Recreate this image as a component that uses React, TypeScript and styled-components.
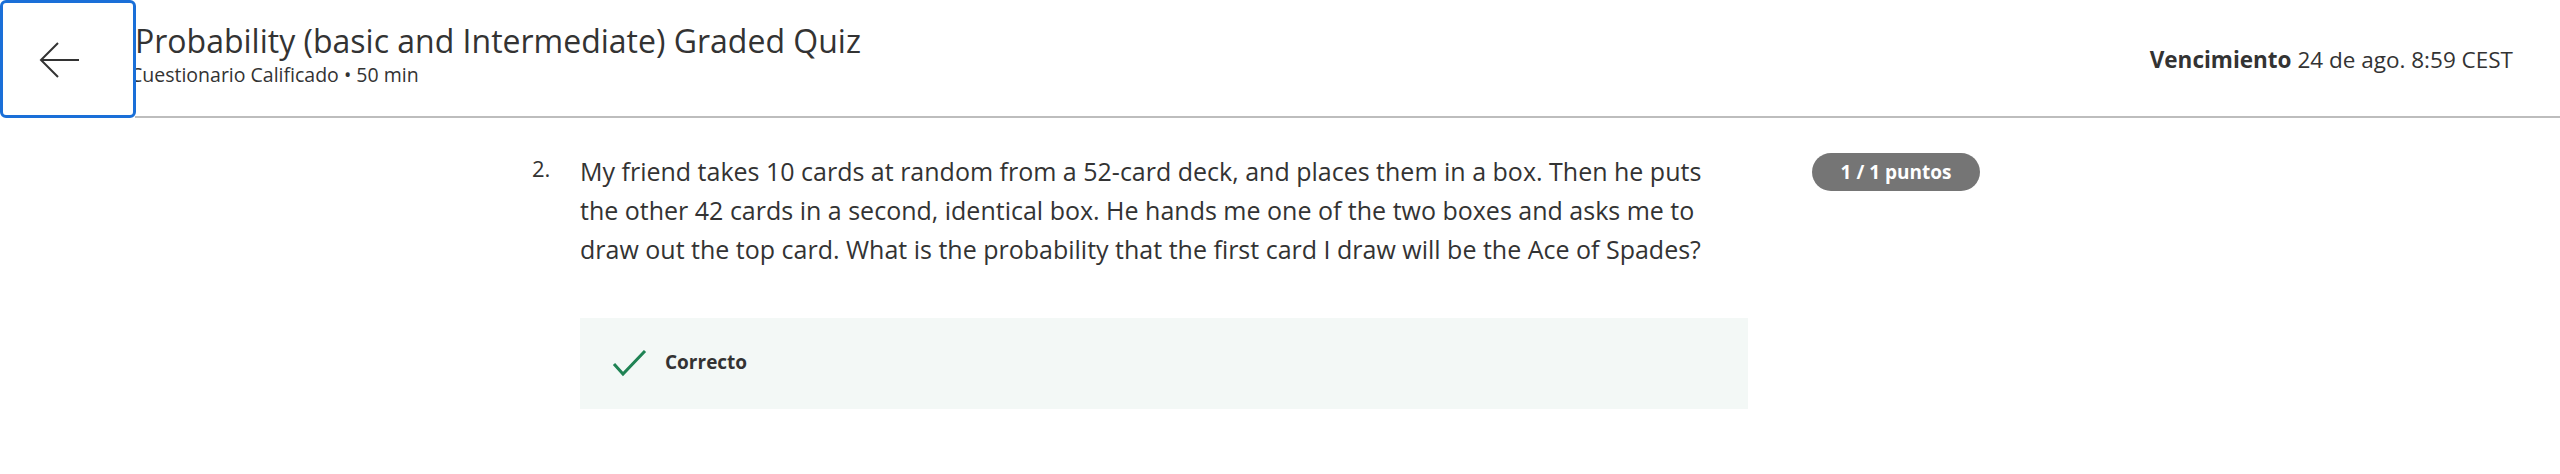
import React from 'react';
import styled, { createGlobalStyle } from 'styled-components';

const GlobalStyle = createGlobalStyle`
  html, body {
    margin: 0;
    padding: 0;
    background: #fff;
    font-family: 'Open Sans', 'Liberation Sans', sans-serif;
    color: #333;
  }
`;

const Page = styled.div`
  width: 2560px;
  height: 474px;
  background: #fff;
`;

const Header = styled.header`
  display: flex;
  align-items: stretch;
  height: 118px;
`;

const BackButton = styled.button`
  flex: 0 0 136px;
  height: 118px;
  box-sizing: border-box;
  display: flex;
  align-items: center;
  justify-content: center;
  background: #fff;
  border: solid 3px #1a6fd8;
  border-radius: 6px;
  padding: 2px 16px 0 0;
  margin: 0;
  cursor: pointer;
  position: relative;
  z-index: 1;
`;

const HeaderBar = styled.div`
  flex: 1;
  display: flex;
  align-items: center;
  justify-content: space-between;
  border-bottom: solid 2px #bdbdbd;
  margin-left: -1px;
  padding-right: 47px;
`;

const TitleBlock = styled.div`
  display: flex;
  flex-direction: column;
  margin-top: -8px;
`;

const Title = styled.h1`
  margin: 0;
  font-size: 32px;
  line-height: 42px;
  font-weight: 400;
  color: #333;
`;

const Subtitle = styled.div`
  font-size: 19.5px;
  line-height: 26px;
  color: #333;
  margin-left: -5px;
`;

const DueDate = styled.div`
  font-size: 22.5px;
  color: #333;
  margin-top: 2px;

  strong {
    font-weight: 700;
  }
`;

const Body = styled.main`
  display: flex;
  align-items: flex-start;
  padding-top: 150px;
  padding-left: 532px;
  margin-top: -118px;
`;

const QuestionNumber = styled.div`
  flex: 0 0 48px;
  font-size: 22px;
  line-height: 40px;
  margin-top: -2px;
  color: #333;
`;

const QuestionBody = styled.div`
  flex: 0 0 1168px;
  display: flex;
  flex-direction: column;
`;

const Prompt = styled.p`
  margin: 0;
  font-size: 25px;
  line-height: 39px;
  color: #333;
  margin-top: 2px;
  white-space: nowrap;
`;

const Feedback = styled.div`
  display: flex;
  align-items: center;
  height: 91px;
  margin-top: 49px;
  background: #f3f8f6;
  padding-left: 32px;
  gap: 17px;
`;

const FeedbackLabel = styled.span`
  font-size: 19px;
  font-weight: 700;
  color: #333;
  margin-top: -4px;
`;

const PointsBadge = styled.div`
  margin-left: 64px;
  margin-top: 3px;
  height: 38px;
  width: 168px;
  border-radius: 19px;
  background: #757575;
  color: #fff;
  font-size: 19px;
  font-weight: 700;
  display: flex;
  align-items: center;
  justify-content: center;
`;

const ArrowIcon = () => (
  <svg width="44" height="44" viewBox="0 0 44 44" fill="none">
    <path d="M41 22H3M20 5L3 22L20 39" stroke="#333" strokeWidth="2" />
  </svg>
);

const CheckIcon = () => (
  <svg width="36" height="28" viewBox="0 0 36 28" fill="none">
    <path d="M2 14L11 24L33 1" stroke="#1f8354" strokeWidth="3" />
  </svg>
);

export default function App() {
  return (
    <Page>
      <GlobalStyle />
      <Header>
        <BackButton aria-label="Back">
          <ArrowIcon />
        </BackButton>
        <HeaderBar>
          <TitleBlock>
            <Title>Probability (basic and Intermediate) Graded Quiz</Title>
            <Subtitle>Cuestionario Calificado • 50 min</Subtitle>
          </TitleBlock>
          <DueDate>
            <strong>Vencimiento</strong> 24 de ago. 8:59 CEST
          </DueDate>
        </HeaderBar>
      </Header>
      <Body>
        <QuestionNumber>2.</QuestionNumber>
        <QuestionBody>
          <Prompt>
            My friend takes 10 cards at random from a 52-card deck, and places them in a box. Then he puts
            <br />
            the other 42 cards in a second, identical box. He hands me one of the two boxes and asks me to
            <br />
            draw out the top card. What is the probability that the first card I draw will be the Ace of Spades?
          </Prompt>
          <Feedback>
            <CheckIcon />
            <FeedbackLabel>Correcto</FeedbackLabel>
          </Feedback>
        </QuestionBody>
        <PointsBadge>1 / 1 puntos</PointsBadge>
      </Body>
    </Page>
  );
}
